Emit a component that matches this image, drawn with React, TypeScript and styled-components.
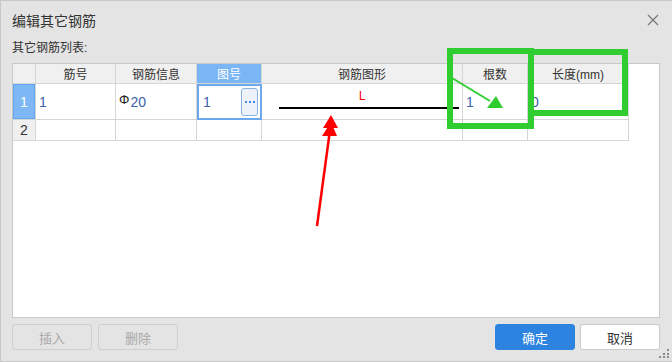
import * as React from "react";
import styled, { createGlobalStyle, css } from "styled-components";

const FONT = `"Liberation Sans", "Noto Sans CJK SC", sans-serif`;

const COLOR = {
  bg: "#e4e4e4",
  border: "#c8c8c8",
  grid: "#d6d6d6",
  head: "#f0f0f0",
  select: "#7db8f5",
  focus: "#6ea8ec",
  text: "#333333",
  data: "#3a64a8",
  primary: "#2d83e0",
  mark: "#2fcd2f",
  red: "#ff0000",
};

type Column = { key: string; title: string; width: number };

const columns: Column[] = [
  { key: "no", title: "筋号", width: 80 },
  { key: "info", title: "钢筋信息", width: 81 },
  { key: "fig", title: "图号", width: 65 },
  { key: "shape", title: "钢筋图形", width: 201 },
  { key: "count", title: "根数", width: 65 },
  { key: "len", title: "长度(mm)", width: 101 },
];

const GlobalStyle = createGlobalStyle`
  html, body {
    margin: 0;
    padding: 0;
    background: #ffffff;
  }
  body {
    font-family: ${FONT};
  }
`;

export default function App() {
  return (
    <>
      <GlobalStyle />
      <Dialog>
        <TitleBar>
          <Title>编辑其它钢筋</Title>
          <CloseIcon width="12" height="12" viewBox="0 0 12 12">
            <path d="M1 1 L11 11 M11 1 L1 11" stroke="#7a7a7a" strokeWidth="1.3" />
          </CloseIcon>
        </TitleBar>
        <Subtitle>其它钢筋列表:</Subtitle>

        <TableBox>
          <Grid $cols={columns.map((c) => c.width)}>
            <HeadCell />
            {columns.map((c) => (
              <HeadCell key={c.key} $active={c.key === "fig"}>
                {c.title}
              </HeadCell>
            ))}

            <RowHead $selected>1</RowHead>
            <Cell>1</Cell>
            <Cell>
              <Grade>Φ</Grade>20
            </Cell>
            <Cell $focused>
              1
              <MoreButton>
                <Dot />
                <Dot />
                <Dot />
              </MoreButton>
            </Cell>
            <ShapeCell>
              <ShapeLabel>L</ShapeLabel>
              <ShapeLine />
            </ShapeCell>
            <Cell>1</Cell>
            <Cell>0</Cell>

            <RowHead>2</RowHead>
            {columns.map((c) => (
              <Cell key={c.key} />
            ))}
          </Grid>
        </TableBox>

        <Footer>
          <ButtonGroup>
            <Button $variant="disabled">插入</Button>
            <Button $variant="disabled">删除</Button>
          </ButtonGroup>
          <ButtonGroup $gap={5}>
            <Button $variant="primary">确定</Button>
            <Button>取消</Button>
          </ButtonGroup>
        </Footer>

        <Grip width="12" height="10" viewBox="0 0 12 10">
          <rect x="9" y="0" width="2" height="2" fill="#8a8a8a" />
          <rect x="5" y="4" width="2" height="2" fill="#8a8a8a" />
          <rect x="9" y="4" width="2" height="2" fill="#8a8a8a" />
          <rect x="1" y="7" width="2" height="2" fill="#8a8a8a" />
          <rect x="5" y="7" width="2" height="2" fill="#8a8a8a" />
          <rect x="9" y="7" width="2" height="2" fill="#8a8a8a" />
        </Grip>

        {/* hand-drawn annotation marks over the screenshot */}
        <Marks width="672" height="362" viewBox="0 0 672 362">
          <rect x="450" y="51" width="81" height="75" fill="none" stroke={COLOR.mark} strokeWidth="6" />
          <rect x="531" y="52" width="94" height="61" fill="none" stroke={COLOR.mark} strokeWidth="6" />
          <line x1="452" y1="78" x2="490" y2="101" stroke={COLOR.mark} strokeWidth="2" />
          <polygon points="496,96 487,108 503,108" fill={COLOR.mark} />

          <line x1="317" y1="226" x2="330" y2="130" stroke={COLOR.red} strokeWidth="2.5" />
          <polygon points="331,115 323,128 338,128" fill={COLOR.red} />
          <polygon points="331,122 322,136 337,136" fill={COLOR.red} />
        </Marks>
      </Dialog>
    </>
  );
}

const Dialog = styled.div`
  position: relative;
  width: 672px;
  height: 362px;
  box-sizing: border-box;
  background: ${COLOR.bg};
  border: 1px solid ${COLOR.border};
  border-right: none;
  display: flex;
  flex-direction: column;
  color: ${COLOR.text};
  font-family: ${FONT};
`;

const TitleBar = styled.div`
  height: 38px;
  display: flex;
  align-items: center;
  justify-content: space-between;
  padding: 0 13px 0 11px;
`;

const Title = styled.div`
  font-size: 14px;
  color: #333;
`;

const CloseIcon = styled.svg`
  display: block;
`;

const Subtitle = styled.div`
  height: 18px;
  line-height: 18px;
  font-size: 12px;
  padding-left: 11px;
  margin-bottom: 6px;
  color: #333;
`;

const TableBox = styled.div`
  height: 255px;
  box-sizing: border-box;
  margin: 0 12px 0 11px;
  background: #ffffff;
  border: 1px solid ${COLOR.border};
`;

const Grid = styled.div<{ $cols: number[] }>`
  display: grid;
  grid-template-columns: 23px ${(p) => p.$cols.map((w) => `${w}px`).join(" ")};
  grid-template-rows: 20px 36px 21px;
  width: max-content;
`;

const BaseCell = css`
  box-sizing: border-box;
  border-right: 1px solid ${COLOR.grid};
  border-bottom: 1px solid ${COLOR.grid};
  display: flex;
  align-items: center;
`;

const HeadCell = styled.div<{ $active?: boolean }>`
  ${BaseCell};
  justify-content: center;
  font-size: 12px;
  background: ${(p) => (p.$active ? "#7ab6f5" : COLOR.head)};
  color: ${(p) => (p.$active ? "#ffffff" : COLOR.text)};
`;

const RowHead = styled.div<{ $selected?: boolean }>`
  ${BaseCell};
  justify-content: center;
  font-size: 14px;
  background: ${(p) => (p.$selected ? COLOR.select : COLOR.head)};
  color: ${(p) => (p.$selected ? "#ffffff" : COLOR.text)};
  ${(p) => p.$selected && `box-shadow: inset 0 0 0 1px #65a5ef;`}
`;

const Cell = styled.div<{ $focused?: boolean }>`
  ${BaseCell};
  padding-left: 3px;
  font-size: 14px;
  color: ${COLOR.data};
  background: #ffffff;
  ${(p) =>
    p.$focused &&
    css`
      outline: 2px solid ${COLOR.focus};
      outline-offset: -2px;
      padding-left: 6px;
    `}
`;

const Grade = styled.span`
  color: #222;
  font-size: 13px;
  margin-right: 1px;
  position: relative;
  top: -2px;
`;

const MoreButton = styled.div`
  margin-left: auto;
  margin-right: 3px;
  width: 17px;
  height: 28px;
  box-sizing: border-box;
  border: 1px solid #86b2e6;
  border-radius: 3px;
  background: #edf1f9;
  display: flex;
  align-items: center;
  justify-content: center;
  gap: 2px;
`;

const Dot = styled.span`
  width: 2px;
  height: 2px;
  background: #3f8ae0;
`;

const ShapeCell = styled.div`
  ${BaseCell};
  flex-direction: column;
  justify-content: flex-end;
  align-items: stretch;
  padding-bottom: 10px;
`;

const ShapeLabel = styled.div`
  font-family: "Liberation Mono", monospace;
  font-size: 12px;
  line-height: 10px;
  color: ${COLOR.red};
  text-align: center;
  margin-bottom: 5px;
`;

const ShapeLine = styled.div`
  height: 2px;
  background: #000000;
  margin: 0 3px 0 17px;
`;

const Footer = styled.div`
  display: flex;
  justify-content: space-between;
  margin: 6px 12px 0 11px;
`;

const ButtonGroup = styled.div<{ $gap?: number }>`
  display: flex;
  gap: ${(p) => p.$gap ?? 6}px;
`;

const Button = styled.div<{ $variant?: "primary" | "disabled" }>`
  width: 80px;
  height: 26px;
  box-sizing: border-box;
  border-radius: 3px;
  display: flex;
  align-items: center;
  justify-content: center;
  font-size: 13px;
  border: 1px solid #cccccc;
  background: #ffffff;
  color: #333;
  ${(p) =>
    p.$variant === "primary" &&
    css`
      background: ${COLOR.primary};
      border-color: ${COLOR.primary};
      color: #ffffff;
    `}
  ${(p) =>
    p.$variant === "disabled" &&
    css`
      background: ${COLOR.bg};
      border-color: #cfcfcf;
      color: #a9a9a9;
    `}
`;

const Grip = styled.svg`
  position: absolute;
  right: 2px;
  bottom: 2px;
`;

const Marks = styled.svg`
  position: absolute;
  top: -1px;
  left: -1px;
  pointer-events: none;
`;
